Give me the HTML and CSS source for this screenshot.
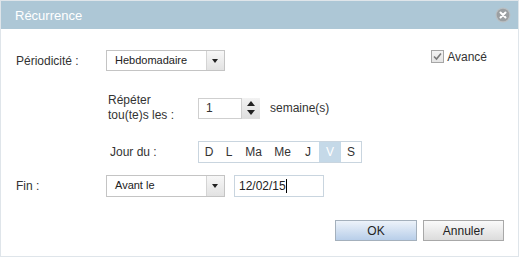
FILE: index.html
```html
<!DOCTYPE html>
<html lang="fr">
<head>
    <meta charset="UTF-8">
    <title>Récurrence</title>
    <link rel="stylesheet" href="styles.css">
</head>
<body>
    <div class="dialog">
        <div class="title-bar">
            <span class="title">Récurrence</span>
            <span class="close-btn">
                <svg width="16" height="16" viewBox="0 0 16 16">
                    <circle cx="8" cy="8" r="7.5" fill="#b9bfc3"/>
                    <circle cx="8" cy="8" r="6.3" fill="#9b9fa2"/>
                    <path d="M5.5 5.5 L10.5 10.5 M10.5 5.5 L5.5 10.5" stroke="#fff" stroke-width="2" stroke-linecap="round"/>
                </svg>
            </span>
        </div>

        <div class="content">
            <div class="row row-first">
                <label class="field-label">Périodicité :</label>
                <div class="select">
                    <span class="select-value">Hebdomadaire</span>
                    <span class="select-arrow"></span>
                </div>
                <label class="advanced">
                    <span class="checkbox">
                        <svg width="9" height="9" viewBox="0 0 9 9">
                            <path d="M1 4.5 L3.5 7 L8 1.5" fill="none" stroke="#7a7a7a" stroke-width="1.6"/>
                        </svg>
                    </span>
                    Avancé
                </label>
            </div>

            <div class="row row-repeat sub">
                <label class="sub-label">Répéter<br>tou(te)s les :</label>
                <div class="spinner">
                    <span class="spinner-value">1</span>
                    <span class="spinner-buttons">
                        <span class="spin-up"></span>
                        <span class="spin-down"></span>
                    </span>
                </div>
                <span class="unit">semaine(s)</span>
            </div>

            <div class="row row-days sub">
                <label class="sub-label">Jour du :</label>
                <div class="days">
                    <span class="day">D</span>
                    <span class="day">L</span>
                    <span class="day day-wide">Ma</span>
                    <span class="day day-wide">Me</span>
                    <span class="day day-mid">J</span>
                    <span class="day active">V</span>
                    <span class="day">S</span>
                </div>
            </div>

            <div class="row row-end">
                <label class="field-label">Fin :</label>
                <div class="select">
                    <span class="select-value">Avant le</span>
                    <span class="select-arrow"></span>
                </div>
                <div class="date-input">12/02/15<span class="caret"></span></div>
            </div>

            <div class="actions">
                <button class="btn btn-ok">OK</button>
                <button class="btn btn-cancel">Annuler</button>
            </div>
        </div>
    </div>
</body>
</html>
```

FILE: styles.css
```css
* {
    margin: 0;
    padding: 0;
    box-sizing: border-box;
    font-family: "Liberation Sans", Arial, sans-serif;
}

body {
    background: #fff;
}

.dialog {
    width: 519px;
    height: 257px;
    border: 1px solid #dfe5ea;
    background: #fff;
}

.title-bar {
    display: flex;
    justify-content: space-between;
    align-items: center;
    height: 28px;
    padding: 0 7px 0 14px;
    background: #adc7d6;
}

.title {
    color: #fff;
    font-size: 13px;
}

.close-btn {
    display: flex;
}

.content {
    padding: 0 14px 0 15px;
    font-size: 12px;
    color: #333;
}

.row {
    display: flex;
    align-items: center;
}

.row-first {
    margin-top: 21px;
    height: 21px;
}

.row-repeat {
    margin-top: 26px;
    height: 22px;
}

.row-days {
    margin-top: 22px;
    height: 22px;
}

.row-end {
    margin-top: 12px;
    height: 22px;
}

.sub {
    padding-left: 92px;
}

.field-label {
    width: 90px;
}

.sub-label {
    width: 90px;
    line-height: 15px;
}

.row-days .sub-label {
    padding-left: 2px;
}

.select {
    display: flex;
    width: 119px;
    height: 21px;
    border: 1px solid #c4c4c4;
    background: #fff;
}

.row-end .select {
    height: 22px;
}

.select-value {
    flex: 1;
    padding-left: 8px;
    font-size: 11px;
    line-height: 19px;
    color: #222;
}

.select-arrow {
    position: relative;
    width: 18px;
    border-left: 1px solid #d4d4d4;
    background: linear-gradient(#f7f7f7, #e2e2e2);
}

.select-arrow::after {
    content: "";
    position: absolute;
    left: 5px;
    top: 8px;
    border-left: 3.5px solid transparent;
    border-right: 3.5px solid transparent;
    border-top: 4px solid #222;
}

.advanced {
    display: flex;
    align-items: center;
    gap: 3px;
    margin-left: auto;
    margin-right: 17px;
    margin-top: -8px;
}

.checkbox {
    display: flex;
    align-items: center;
    justify-content: center;
    width: 13px;
    height: 13px;
    border: 1px solid #a6a6a6;
    background: linear-gradient(#f4f4f4, #e4e4e4);
}

.spinner {
    display: flex;
    align-items: center;
    height: 21px;
}

.spinner-value {
    width: 44px;
    height: 21px;
    padding-left: 7px;
    border: 1px solid #cfcfcf;
    line-height: 19px;
}

.spinner-buttons {
    display: flex;
    flex-direction: column;
    width: 18px;
    height: 21px;
    background: linear-gradient(#f2f2f2, #dedede);
}

.spin-up,
.spin-down {
    position: relative;
    flex: 1;
}

.spin-up::after,
.spin-down::after {
    content: "";
    position: absolute;
    left: 5px;
    border-left: 4px solid transparent;
    border-right: 4px solid transparent;
}

.spin-up::after {
    top: 3px;
    border-bottom: 5px solid #222;
}

.spin-down::after {
    top: 2px;
    border-top: 5px solid #222;
}

.unit {
    margin-left: 10px;
}

.days {
    display: flex;
    height: 22px;
    border: 1px solid #c9d5df;
}

.day {
    display: flex;
    align-items: center;
    justify-content: center;
    width: 20px;
    color: #333;
}

.day-wide {
    width: 29px;
}

.day-mid {
    width: 22px;
}

.day.active {
    width: 22px;
    background: #c5d9e8;
    color: #fff;
}

.date-input {
    display: flex;
    align-items: center;
    width: 90px;
    height: 22px;
    margin-left: 9px;
    padding-left: 4px;
    border: 1px solid #c9d5df;
    color: #222;
}

.caret {
    width: 1px;
    height: 14px;
    background: #000;
}

.actions {
    display: flex;
    justify-content: flex-end;
    gap: 6px;
    margin-top: 23px;
}

.btn {
    height: 21px;
    font-size: 12px;
    color: #222;
    border: 1px solid #a8a8a8;
    cursor: pointer;
}

.btn-ok {
    width: 82px;
    border-color: #a4b0bc;
    background: linear-gradient(#edf3fa, #b8cee9);
}

.btn-cancel {
    width: 81px;
    background: linear-gradient(#fafafa, #dcdcdc);
}
```
